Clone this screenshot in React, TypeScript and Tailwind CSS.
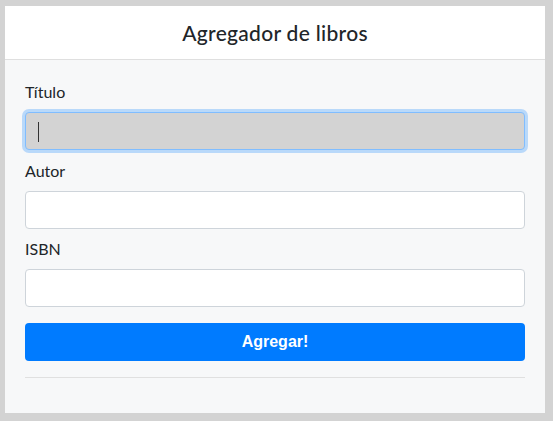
export default function App() {
  const label = "block text-[16px] leading-6 text-[#212529] mb-2"
  const input =
    "block w-full h-[38px] rounded-[4px] border border-[#ced4da] bg-white px-3"

  return (
    <div className="w-[553px] h-[421px] bg-[#d3d3d3] pl-[5px] pr-[8px] pt-[6px] pb-[8px] font-['Lato','Noto_Sans',sans-serif]">
      <div className="h-full flex flex-col bg-[#f7f8f9]">
        <div className="h-[54px] shrink-0 bg-white border-b border-[#dfdfdf] flex items-center justify-center">
          <h1 className="text-[21px] font-medium text-[#212529] tracking-[0.3px]">Agregador de libros</h1>
        </div>
        <form className="px-5 pt-5" onSubmit={(e) => e.preventDefault()}>
          <div className="mb-[9px]">
            <label className={label}>Título</label>
            <div className="relative h-[38px] rounded-[4px] border border-[#80bdff] bg-[#d3d3d3] shadow-[0_0_0_3px_rgba(0,123,255,0.25)]">
              <span className="absolute left-3 top-[9px] h-[20px] w-px bg-[#333]" />
            </div>
          </div>
          <div className="mb-[8px]">
            <label className={label}>Autor</label>
            <input className={input} />
          </div>
          <div className="mb-4">
            <label className={label}>ISBN</label>
            <input className={input} />
          </div>
          <button
            type="submit"
            className="block w-full h-[38px] rounded-[4px] bg-[#007bff] text-white text-[16px] font-bold font-['Liberation_Sans',Arial,sans-serif]"
          >
            Agregar!
          </button>
          <hr className="mt-4 border-t border-[#e0e0e0]" />
        </form>
      </div>
    </div>
  )
}
